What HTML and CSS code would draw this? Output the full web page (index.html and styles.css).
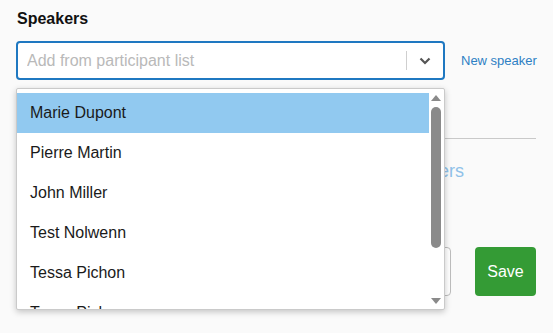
FILE: index.html
```html
<!DOCTYPE html>
<html lang="en">
<head>
<meta charset="UTF-8">
<title>Speakers</title>
<link rel="stylesheet" href="styles.css">
</head>
<body>
<div class="panel">
<div class="label">Speakers</div>
<div class="field">
<div class="row">
<div class="select">
<input class="selectInput" type="text" placeholder="Add from participant list">
<span class="sep"></span>
<svg class="chevron" width="12" height="8" viewBox="0 0 12 8"><path d="M1.5 1.5l4.5 4.5 4.5-4.5" fill="none" stroke="#555" stroke-width="2.2"/></svg>
</div>
<a class="newLink" href="#">New speaker</a>
</div>
<div class="menu">
<ul class="options">
<li class="option active">Marie Dupont</li>
<li class="option">Pierre Martin</li>
<li class="option">John Miller</li>
<li class="option">Test Nolwenn</li>
<li class="option">Tessa Pichon</li>
<li class="option">Tessa Pichon</li>
</ul>
<div class="scrollbar">
<svg class="arrow" width="10" height="6" viewBox="0 0 10 6"><path d="M0 6L5 0L10 6Z" fill="#8a8a8a"/></svg>
<div class="thumb"></div>
<svg class="arrow down" width="10" height="6" viewBox="0 0 10 6"><path d="M0 0L5 6L10 0Z" fill="#8a8a8a"/></svg>
</div>
</div>
</div>
<div class="divider"></div>
<div class="hint">Drag participants from the list or add new speakers</div>
<div class="actions">
<button class="btnCancel">Cancel</button>
<button class="btnSave">Save</button>
</div>
</div>
</body>
</html>
```

FILE: styles.css
```css
* {
margin: 0;
padding: 0;
box-sizing: border-box;
}
html, body {
min-height: 100%;
}
body {
background-color: #fafafa;
font-family: "Liberation Sans", Arial, sans-serif;
color: #1a1a1a;
}
.panel {
padding: 9px 17px 37px 16px;
}
.label {
font-size: 16px;
font-weight: bold;
line-height: 20px;
color: #111;
margin-bottom: 12px;
padding-left: 1px;
}
.field {
position: relative;
}
.row {
display: flex;
align-items: center;
gap: 16px;
}
.select {
width: 429px;
flex-shrink: 0;
height: 39px;
border: 2px solid #1f78c1;
border-radius: 4px;
background-color: white;
display: flex;
align-items: center;
}
.selectInput {
flex: 1;
min-width: 0;
border: 0;
outline: none;
background: transparent;
font-family: inherit;
font-size: 16px;
padding-left: 9px;
}
.selectInput::placeholder {
color: #b9b9b9;
}
.sep {
width: 1px;
height: 19px;
background-color: #cfcfcf;
}
.chevron {
margin: 0 12px 0 12px;
}
.newLink {
font-size: 13px;
color: #2d80c4;
text-decoration: none;
white-space: nowrap;
}
/* dropdown over the page */
.menu {
position: absolute;
top: 47px;
left: 0;
width: 429px;
height: 222px;
background-color: white;
border: 1px solid #cacaca;
border-radius: 2px;
box-shadow: 0 2px 6px rgba(0, 0, 0, 0.22);
display: flex;
z-index: 2;
}
.options {
list-style: none;
flex: 1;
padding-top: 4px;
overflow: hidden;
}
.option {
height: 40px;
line-height: 40px;
padding-left: 13px;
font-size: 16px;
color: #1a1a1a;
}
.option.active {
background-color: #91c9f0;
}
.scrollbar {
width: 15px;
display: flex;
flex-direction: column;
align-items: center;
padding: 6px 2px 5px 0;
}
.thumb {
width: 10px;
height: 141px;
margin-top: 6px;
border-radius: 5px;
background-color: #8a8a8a;
}
.arrow.down {
margin-top: auto;
}
.divider {
margin-top: 58px;
height: 1px;
background-color: #c9c9c9;
}
.hint {
margin-top: 20px;
font-size: 18px;
line-height: 24px;
color: #8fc1e9;
text-align: right;
padding-right: 72px;
}
.actions {
display: flex;
justify-content: flex-end;
gap: 24px;
margin-top: 64px;
}
.actions button {
height: 49px;
border-radius: 4px;
font-family: inherit;
font-size: 16px;
padding: 0 12px;
}
.btnCancel {
background-color: white;
border: 1px solid #bdbdbd;
color: #333;
}
.btnSave {
background-color: #349b35;
border: 0;
color: white;
width: 61px;
}
```
